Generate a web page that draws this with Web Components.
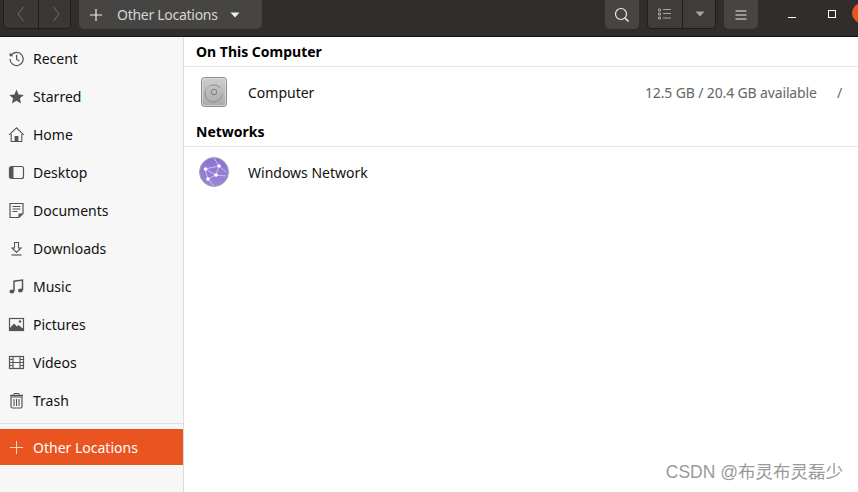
<!DOCTYPE html>
<html lang="en"><head><meta charset="utf-8"><title>Other Locations</title>
<style>
html,body{margin:0;padding:0;background:#fff}
body{width:858px;height:492px;overflow:hidden;font-family:"Noto Sans","Open Sans",sans-serif;font-size:14px;color:#111}
</style></head><body>
<files-window>
  <header-bar slot="header"></header-bar>
  <places-sidebar slot="side"></places-sidebar>
  <locations-view slot="main"></locations-view>
</files-window>
<script>
const I={
recent:'<path d="M3.2 5.2A6.6 6.6 0 1 1 2 9" fill="none" stroke="currentColor" stroke-width="1.2"/><path d="M1.6 2.6v3.6h3.6z" fill="currentColor"/><path d="M8.6 4.8v4.4l2.8 1.8" fill="none" stroke="currentColor" stroke-width="1.2"/>',
starred:'<path d="M8.5 1.6l2.1 4.8 5.2.5-3.9 3.4 1.2 5.1-4.6-2.7-4.6 2.7 1.2-5.1L1.2 6.9l5.2-.5z" fill="currentColor"/>',
home:'<path d="M1.2 8.8L8.5 1.8l7.3 7" fill="none" stroke="currentColor" stroke-width="1.1"/><path d="M3.2 8v7.5h10.6V8" fill="none" stroke="currentColor" stroke-width="1.1"/><rect x="6.6" y="10" width="3.8" height="5.5" fill="currentColor"/>',
desktop:'<rect x="1.5" y="2.5" width="14" height="12" rx="2" fill="none" stroke="currentColor" stroke-width="1.2"/><path d="M2 3h3.5v11H2z" fill="currentColor"/>',
documents:'<path d="M2 1.5h13v10l-4 4H2z" fill="none" stroke="currentColor" stroke-width="1.2"/><path d="M4.5 4.5h8M4.5 7h8M4.5 9.5h5" stroke="currentColor" stroke-width="1.2"/><path d="M10.5 15.5v-4h4.5z" fill="currentColor"/>',
downloads:'<path d="M6.5 2.5h4v5.5h2.5l-4.500 4.500L4 8h2.500z" fill="none" stroke="currentColor" stroke-width="1.1"/><path d="M3.500 15h10" stroke="currentColor" stroke-width="1.2"/>',
music:'<path d="M6 13V3.200l8.500-1.200v10" fill="none" stroke="currentColor" stroke-width="1.500"/><ellipse cx="3.900" cy="13.500" rx="2.400" ry="1.900" fill="currentColor"/><ellipse cx="12.400" cy="12.500" rx="2.400" ry="1.900" fill="currentColor"/>',
pictures:'<rect x="1.500" y="2.500" width="14" height="12" fill="none" stroke="currentColor" stroke-width="1.200"/><path d="M1.500 12.500l4.500-5 3 3 1.500-1.500 5 4v2h-14z" fill="currentColor"/><circle cx="12" cy="5.500" r="1.200" fill="currentColor"/><rect x="1" y="12.500" width="15" height="2.500" fill="currentColor"/>',
videos:'<rect x="1.500" y="2.500" width="14" height="12" fill="none" stroke="currentColor" stroke-width="1.200"/><path d="M5 2.500v12M12 2.500v12M5 8.500h7M1.500 5.500H5M1.500 8.500H5M1.500 11.500H5M12 5.500h3.500M12 8.500h3.500M12 11.500h3.500" stroke="currentColor" stroke-width="1.100" fill="none"/>',
trash:'<path d="M3 5h11v9.500a1.500 1.500 0 0 1-1.500 1.500h-8A1.500 1.500 0 0 1 3 14.500z" fill="none" stroke="currentColor" stroke-width="1.200"/><path d="M2 3.500h13" stroke="currentColor" stroke-width="1.500"/><path d="M6 2.800V1.500h5v1.300" fill="none" stroke="currentColor"/><path d="M6 7v7M8.500 7v7M11 7v7" stroke="currentColor" stroke-width="1.100"/>',
plus:'<path d="M8.500 2v13M2 8.500h13" stroke="currentColor" stroke-width="1"/>'
};
function def(name,html,setup){
  customElements.define(name,class extends HTMLElement{
    constructor(){super();this.attachShadow({mode:'open'}).innerHTML=typeof html==='function'?html(this):html}
    connectedCallback(){if(setup)setup(this,this.shadowRoot)}
  });
}
def('files-window',`<style>
:host{display:grid;grid-template-columns:184px 1fr;grid-template-rows:37px 455px;width:858px;height:492px}
.h{grid-column:1/3}
.s{border-right:1px solid #dcdcdc;background:#f7f7f7;min-width:0}
</style><div class="h"><slot name="header"></slot></div><div class="s"><slot name="side"></slot></div><div><slot name="main"></slot></div>`);

def('header-btn',`<style>
:host{display:flex;align-items:center;justify-content:center;height:29px;background:#474543;box-sizing:border-box;color:#eee;flex:none}
:host([flat]){background:transparent}
svg{display:block}
</style><slot></slot>`);

def('header-bar',`<style>
:host{display:flex;align-items:flex-start;height:37px;box-sizing:border-box;background:#302e2c;border-bottom:1px solid #161514;overflow:hidden;color:#eee;font-size:14px}
header-btn{border-radius:0 0 5px 5px}
.group{display:flex;border:1px solid #1f1e1d;border-top:0;border-radius:0 0 5px 5px;margin-top:-1px;overflow:hidden;height:30px;box-sizing:border-box;flex:none}
.group header-btn{border-radius:0;height:29px}
.nav{width:68px;margin-left:3px;margin-right:8px}
.nav header-btn{width:34px;background:#3a3836}
.nav header-btn+header-btn{border-left:1px solid #1f1e1d}
.path{width:183px;justify-content:flex-start;padding-left:10px;background:#474543}
.path .t{margin-left:14px;color:#d5d5d3;width:106px;white-space:nowrap;letter-spacing:-.02em}
.path .a{margin-left:6px}
.sp{flex:1}
.search{width:34px;margin-right:8px}
.view{width:69px;margin-right:8px}
.view header-btn{width:34px;background:#3f3d3b}
.view header-btn+header-btn{border-left:1px solid #1f1e1d;width:35px}
.menu{width:34px;margin-right:14px}
.win{width:40px;height:27px;display:flex;align-items:center;justify-content:center;flex:none}
.dot{width:20px;height:20px;border-radius:50%;background:#e95420;margin:3px -14px 0 0;flex:none}
</style>
<div class="group nav">
 <header-btn><svg width="10" height="18" viewBox="0 0 10 18"><path d="M7.500 2L2 9l5.500 7" fill="none" stroke="#6f6d6b" stroke-width="1"/></svg></header-btn>
 <header-btn><svg width="10" height="18" viewBox="0 0 10 18"><path d="M2.500 2L8 9l-5.500 7" fill="none" stroke="#6f6d6b" stroke-width="1"/></svg></header-btn>
</div>
<header-btn class="path"><svg width="14" height="14" viewBox="0 0 14 14"><path d="M7 1v12M1 7h12" stroke="#eee" stroke-width="1.200"/></svg><span class="t">Other Locations</span><svg class="a" width="12" height="8" viewBox="0 0 12 8"><path d="M1.500 1.500h9L6 6.500z" fill="#eee"/></svg></header-btn>
<div class="sp"></div>
<header-btn class="search"><svg width="16" height="16" viewBox="0 0 16 16"><circle cx="7" cy="7" r="5.500" fill="none" stroke="#eee" stroke-width="1.200"/><path d="M11 11l3.500 3.500" stroke="#eee" stroke-width="1.500"/></svg></header-btn>
<div class="group view">
 <header-btn><svg width="14" height="12" viewBox="0 0 14 12"><path d="M.5 1h2v2h-2zM.5 5h2v2h-2zM.5 9h2v2h-2z" fill="none" stroke="#a5a4a2"/><path d="M5 1.500h8M5 5.500h8M5 10h8" stroke="#a5a4a2" stroke-width="1"/></svg></header-btn>
 <header-btn><svg width="12" height="8" viewBox="0 0 12 8"><path d="M1.500 1.500h9L6 6.500z" fill="#a5a4a2"/></svg></header-btn>
</div>
<header-btn class="menu"><svg width="12" height="10" viewBox="0 0 12 10"><path d="M.5 1h11M.5 5h11M.5 9h11" stroke="#eee" stroke-width="1"/></svg></header-btn>
<div class="win"><svg width="10" height="10" viewBox="0 0 10 10"><path d="M1 8.500h8" stroke="#fff" stroke-width="1"/></svg></div>
<div class="win"><svg width="10" height="10" viewBox="0 0 10 10"><rect x="1.500" y="1.500" width="7" height="7" fill="none" stroke="#fff" stroke-width="1"/></svg></div>
<div class="dot"></div>`);

def('side-item',el=>`<style>
:host{display:flex;align-items:center;height:38px;padding-left:8px;box-sizing:border-box;color:#111}
svg{flex:none;color:#555;margin-right:8px;display:block}
:host([selected]){height:36px;background:#e95420;color:#fff}
:host([selected]) svg{color:#f9d3c3}
</style><svg width="17" height="17" viewBox="0 0 17 17">${I[el.getAttribute('icon')]}</svg><slot></slot>`);

def('places-sidebar',`<style>
:host{display:block;padding-top:2px;height:100%;box-sizing:border-box}
hr{border:0;border-top:1px solid #dfdfdf;margin:4px 0 5px}
</style>
<side-item icon="recent">Recent</side-item>
<side-item icon="starred">Starred</side-item>
<side-item icon="home">Home</side-item>
<side-item icon="desktop">Desktop</side-item>
<side-item icon="documents">Documents</side-item>
<side-item icon="downloads">Downloads</side-item>
<side-item icon="music">Music</side-item>
<side-item icon="pictures">Pictures</side-item>
<side-item icon="videos">Videos</side-item>
<side-item icon="trash">Trash</side-item>
<hr>
<side-item icon="plus" selected>Other Locations</side-item>`);

def('section-title',`<style>
:host{display:flex;align-items:center;height:30px;box-sizing:border-box;padding-left:12px;font-weight:700;font-size:14px;color:#000;border-bottom:1px solid #e6e6e6}
</style><slot></slot>`);

def('location-row',`<style>
:host{display:flex;align-items:center;height:50px;box-sizing:border-box;padding-left:14px;color:#111;font-size:14px}
.i{width:32px;height:32px;flex:none;margin-right:18px}
.n{flex:1;min-width:0}
::slotted([slot=meta]){color:#666}
</style><div class="i"><slot name="icon"></slot></div><div class="n"><slot></slot></div><slot name="meta"></slot>`);

def('locations-view',`<style>
:host{display:block;position:relative;height:100%;background:#fff}
.meta{display:flex;font-size:14px;letter-spacing:-.01em}
.size{width:174px;white-space:nowrap;margin-right:18px}
.mnt{width:21px}
svg{display:block}
.mark{position:absolute;right:15px;bottom:9px;font:17.500px "Liberation Sans","Noto Sans CJK SC",sans-serif;color:#9a9a9a;white-space:nowrap}
</style>
<section-title>On This Computer</section-title>
<location-row>
 <svg slot="icon" width="32" height="32" viewBox="0 0 32 32"><defs><linearGradient id="g" x1="0" y1="0" x2="0" y2="1"><stop offset="0" stop-color="#cfcfcf"/><stop offset="1" stop-color="#a9a9a9"/></linearGradient></defs><rect x="3.500" y="1.500" width="25" height="29" rx="3" fill="url(#g)" stroke="#8d8d8d"/><rect x="4.500" y="2.500" width="23" height="27" rx="2" fill="none" stroke="#dedede" stroke-width=".7"/><path d="M22 12A8.500 8.500 0 1 0 24 18" fill="none" stroke="#8c8c8c" stroke-width="1"/><circle cx="16" cy="16" r="8" fill="none" stroke="#b8b8b8" stroke-width=".8"/><circle cx="16" cy="16" r="2.800" fill="none" stroke="#808080" stroke-width="1"/></svg>
 Computer
 <div slot="meta" class="meta"><span class="size">12.5 GB / 20.4 GB available</span><span class="mnt">/</span></div>
</location-row>
<section-title>Networks</section-title>
<location-row>
 <svg slot="icon" width="32" height="32" viewBox="0 0 32 32"><defs><linearGradient id="p" x1="0" y1="0" x2="0" y2="1"><stop offset="0" stop-color="#8a72cf"/><stop offset="1" stop-color="#9b86d8"/></linearGradient></defs><circle cx="16" cy="16" r="14.500" fill="url(#p)" stroke="#a8a4b4" stroke-width="1"/><path d="M7 13l14-3M7 13l11 6M21 10l-3 9M10 23l8-4M7 13l3 10M21 10l7 6M18 19l10 1M21 10l-5-8M10 23l6 7" stroke="#d9d0f2" stroke-width=".8" fill="none"/><g fill="#fff"><circle cx="7.500" cy="13" r="1.800"/><circle cx="21" cy="10" r="1.800"/><circle cx="18" cy="19" r="1.800"/><circle cx="10" cy="23" r="1.800"/></g></svg>
 Windows Network
</location-row>
<div class="mark">CSDN @布灵布灵磊少</div>`);
</script>
</body></html>
